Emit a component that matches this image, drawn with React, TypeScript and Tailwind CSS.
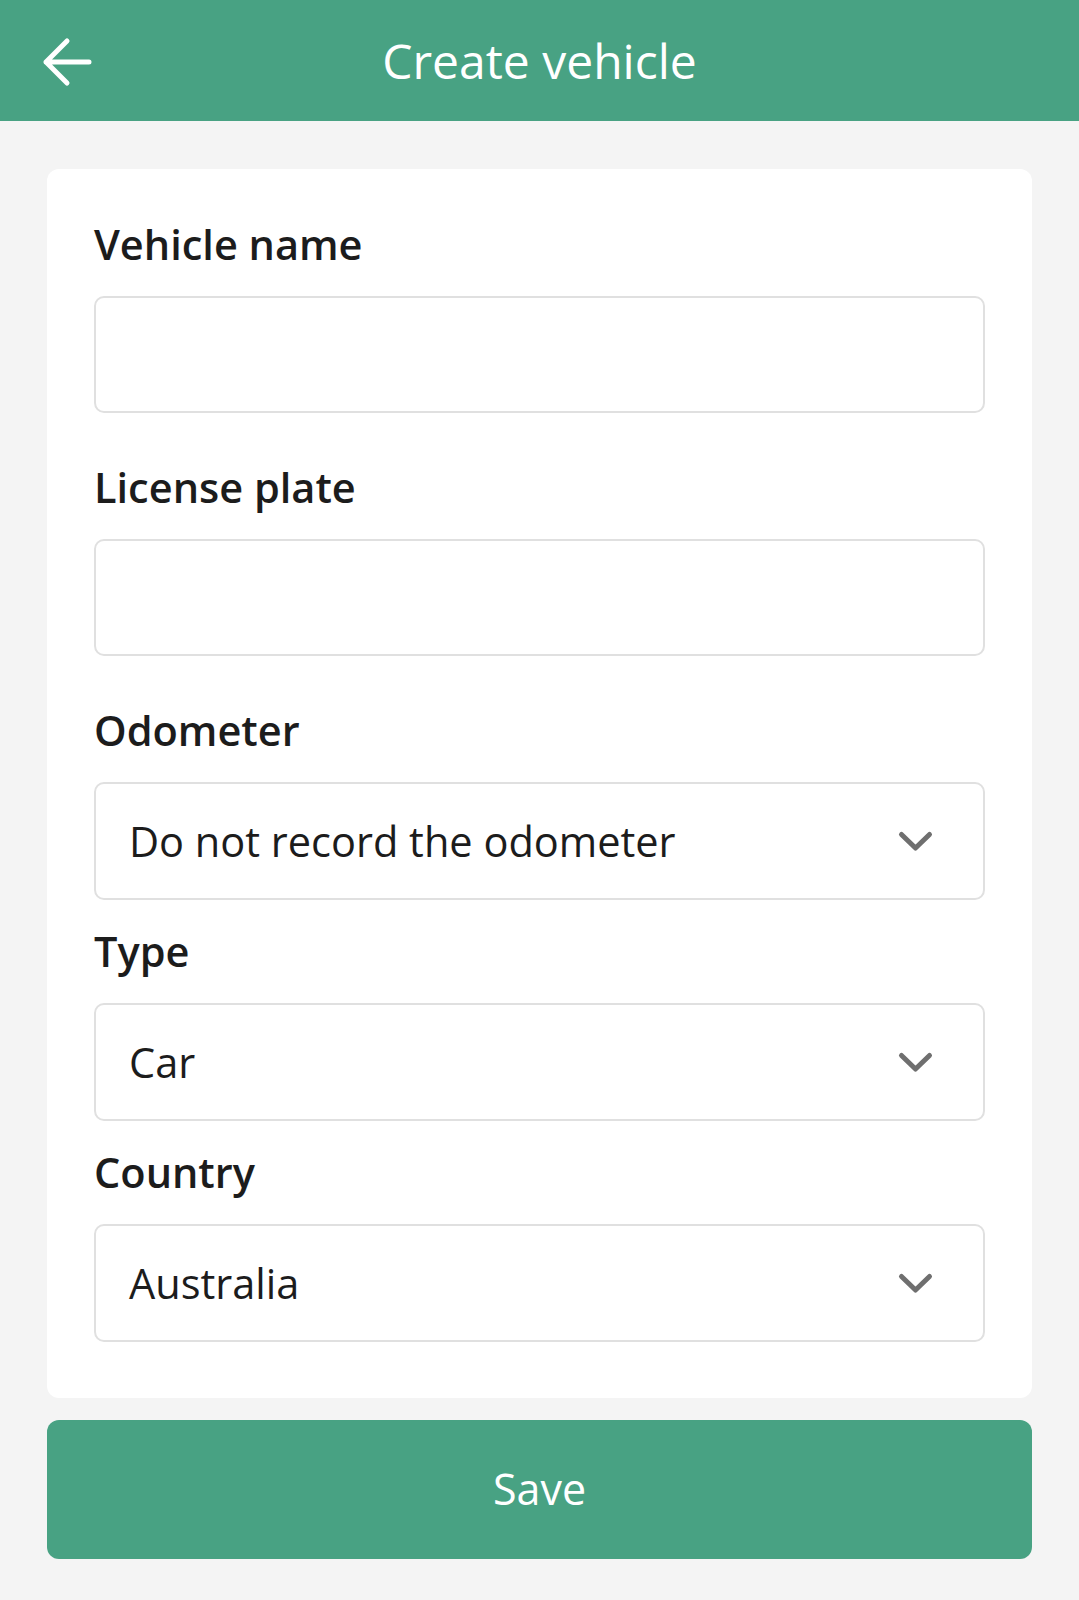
import { useState } from 'react';

const font = { fontFamily: '"Open Sans", "Noto Sans", sans-serif' };

function BackArrow() {
  return (
    <svg width="50" height="50" viewBox="0 0 50 50" fill="none" className="shrink-0">
      <path
        d="M25 5 L4 26 L25 47 M4 26 H47"
        stroke="white"
        strokeWidth="5"
        strokeLinecap="round"
        strokeLinejoin="round"
        transform="translate(0 -1)"
      />
    </svg>
  );
}

function Chevron() {
  return (
    <svg width="37" height="23" viewBox="0 0 37 23" fill="none" className="shrink-0">
      <path
        d="M4.5 4.5 L18.5 18 L32.5 4.5"
        stroke="#6f6f6f"
        strokeWidth="5"
        strokeLinecap="round"
        strokeLinejoin="round"
      />
    </svg>
  );
}

function Label({ children }: { children: string }) {
  return (
    <div className="text-[41.5px] leading-[57px] font-semibold text-[#1c1c1c]">{children}</div>
  );
}

function TextField({ label, value, onChange }: { label: string; value: string; onChange: (v: string) => void }) {
  return (
    <div className="flex flex-col">
      <Label>{label}</Label>
      <input
        value={value}
        onChange={e => onChange(e.target.value)}
        className="mt-[23px] h-[117px] w-full rounded-[10px] border-2 border-[#e0e0e0] bg-white px-[33px] text-[41.5px] text-[#1c1c1c] outline-none"
        style={font}
      />
    </div>
  );
}

function SelectField({ label, value }: { label: string; value: string }) {
  return (
    <div className="flex flex-col">
      <Label>{label}</Label>
      <div className="mt-[23px] flex h-[118px] w-full items-center justify-between rounded-[10px] border-2 border-[#e0e0e0] bg-white pl-[33px] pr-[49px]">
        <span className="text-[41.5px] text-[#1c1c1c]">{value}</span>
        <Chevron />
      </div>
    </div>
  );
}

export default function App() {
  const [name, setName] = useState('');
  const [plate, setPlate] = useState('');

  return (
    <div className="min-h-[1600px] w-full bg-[#f4f4f4]" style={font}>
      {/* Header */}
      <div className="relative flex h-[121px] items-center justify-center bg-[#48a283]">
        <button className="absolute left-[42px] top-[37px]">
          <BackArrow />
        </button>
        <h1 className="text-[48px] text-white">Create vehicle</h1>
      </div>

      <div className="px-[47px] pt-[48px]">
        {/* Form card */}
        <div className="flex flex-col rounded-[12px] bg-white px-[47px] pt-[47px] pb-[56px]">
          <TextField label="Vehicle name" value={name} onChange={setName} />
          <div className="mt-[46px]">
            <TextField label="License plate" value={plate} onChange={setPlate} />
          </div>
          <div className="mt-[46px]">
            <SelectField label="Odometer" value="Do not record the odometer" />
          </div>
          <div className="mt-[23px]">
            <SelectField label="Type" value="Car" />
          </div>
          <div className="mt-[23px]">
            <SelectField label="Country" value="Australia" />
          </div>
        </div>

        {/* Save */}
        <button className="mt-[22px] flex h-[139px] w-full items-center justify-center rounded-[12px] bg-[#48a283] text-[43px] text-white">
          Save
        </button>
      </div>
    </div>
  );
}
